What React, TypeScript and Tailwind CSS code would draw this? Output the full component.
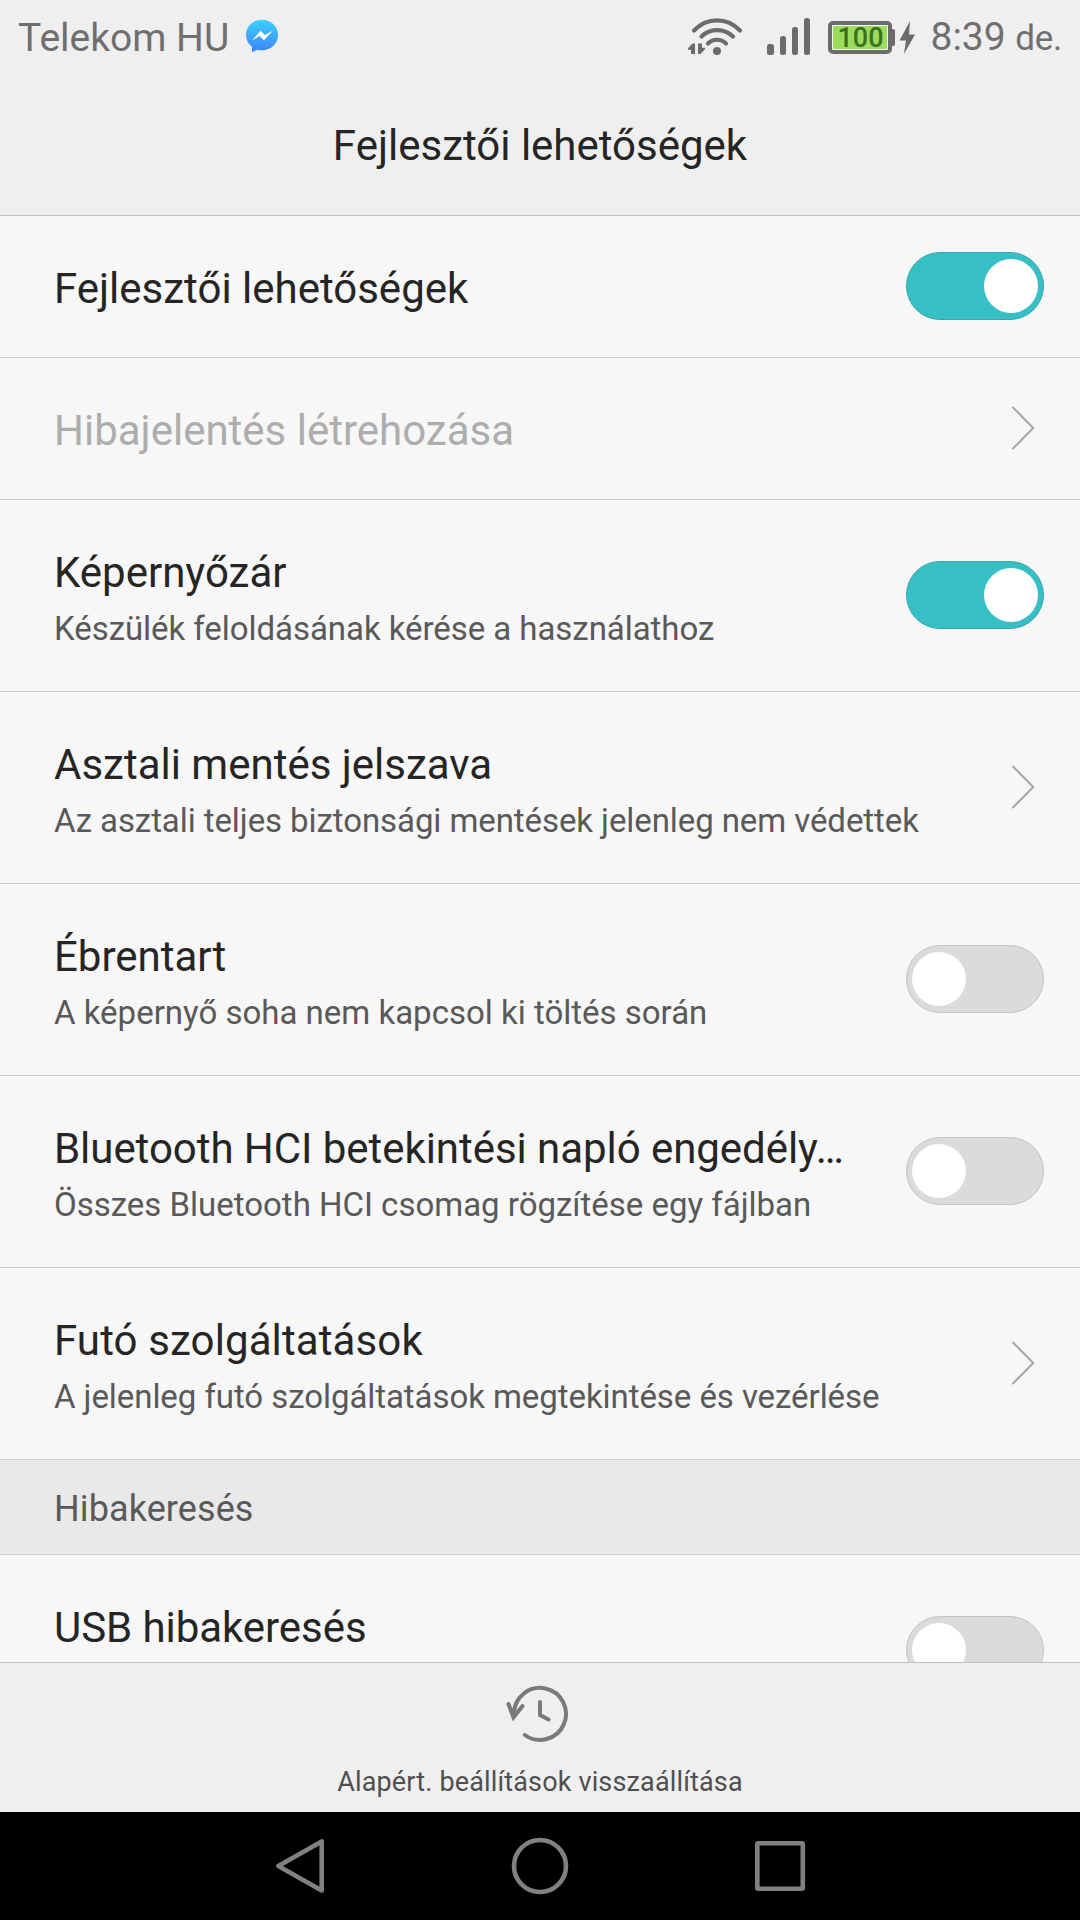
type Control = 'on' | 'off' | 'chevron';

interface Row {
  title: string;
  titleTracking?: string;
  summary?: string;
  summaryTracking?: string;
  control: Control;
  disabled?: boolean;
}

const general: Row[] = [
  { title: 'Fejlesztői lehetőségek', control: 'on' },
  { title: 'Hibajelentés létrehozása', control: 'chevron', disabled: true },
  {
    title: 'Képernyőzár',
    summary: 'Készülék feloldásának kérése a használathoz',
    summaryTracking: 'tracking-[-0.055px]',
    control: 'on',
  },
  {
    title: 'Asztali mentés jelszava',
    summary: 'Az asztali teljes biztonsági mentések jelenleg nem védettek',
    summaryTracking: 'tracking-[-0.08px]',
    control: 'chevron',
  },
  { title: 'Ébrentart', summary: 'A képernyő soha nem kapcsol ki töltés során', control: 'off' },
  {
    title: 'Bluetooth HCI betekintési napló engedély…',
    titleTracking: 'tracking-[-0.05px]',
    summary: 'Összes Bluetooth HCI csomag rögzítése egy fájlban',
    summaryTracking: 'tracking-[-0.01px]',
    control: 'off',
  },
  {
    title: 'Futó szolgáltatások',
    titleTracking: 'tracking-[0.11px]',
    summary: 'A jelenleg futó szolgáltatások megtekintése és vezérlése',
    summaryTracking: 'tracking-[-0.065px]',
    control: 'chevron',
  },
];

const debugging: Row[] = [{ title: 'USB hibakeresés', summary: '', titleTracking: 'tracking-[-0.06px]', control: 'off' }];

function Switch({ on }: { on: boolean }) {
  return (
    <div
      className={
        on
          ? 'mb-[2px] flex h-[68px] w-[138px] items-center justify-end rounded-full border border-[#35a9ae] bg-[#36c0c6] px-[5px]'
          : 'mb-[2px] flex h-[68px] w-[138px] items-center rounded-full border border-[#c3c3c3] bg-[#dbdbdb] px-[5px]'
      }
    >
      <div className="size-[54px] rounded-full bg-white" />
    </div>
  );
}

function Chevron() {
  return (
    <svg className="mr-[9px] mb-[2px] h-11 w-6" viewBox="0 0 24 44" fill="none" stroke="#a6a6a6" strokeWidth="2" strokeLinecap="round">
      <path d="M2 1.500 22.300 22 2 42.500" />
    </svg>
  );
}

function SettingRow({ row }: { row: Row }) {
  const tall = row.summary !== undefined;
  return (
    <div className={`flex shrink-0 items-center justify-between border-b border-[#cfcfcf] pr-9 pl-[54px] ${tall ? 'h-48' : 'h-[142px]'}`}>
      <div className="self-start pt-12 whitespace-nowrap">
        <div className={`text-[42px] leading-[50px] ${row.titleTracking ?? ''} ${row.disabled ? 'text-[#adadad]' : 'text-[#252525]'}`}>
          {row.title}
        </div>
        {row.summary && (
          <div className={`mt-[11px] text-[33px] leading-10 text-[#595959] ${row.summaryTracking ?? ''}`}>{row.summary}</div>
        )}
      </div>
      {row.control === 'chevron' ? <Chevron /> : <Switch on={row.control === 'on'} />}
    </div>
  );
}

function Messenger() {
  return (
    <svg className="mb-[3px] ml-4 h-[34px] w-[34px]" viewBox="245 19 34 34">
      <defs>
        <linearGradient id="bubble" x1="0" y1="0" x2="0" y2="1">
          <stop offset="0" stopColor="#3dd0fb" />
          <stop offset="1" stopColor="#3c84fa" />
        </linearGradient>
      </defs>
      <path fill="url(#bubble)" d="M262 19.800c9.200 0 16 6.700 16 15.200s-6.800 15.200-16 15.200c-1.600 0-3-.1-4.400-.5L252 52.300V46.800C248.300 44 246 40 246 35c0-8.500 6.800-15.200 16-15.200Z" />
      <path fill="#fff" d="m252 40.500 8.500-9.700 4.300 4.200 8-4.300-8.900 9.600-4.300-4.200Z" />
    </svg>
  );
}

function StatusIcons() {
  return (
    <div className="flex items-center">
      <svg className="h-10 w-14" viewBox="687 17 56 40" fill="none" stroke="#6b6b6b" strokeWidth="4.200" strokeLinecap="round">
        <path d="M694 30.500C707 17 727 17 740 30.500M701.500 36.500C710 28 724 28 733 36.500M708 43.500C713 38.500 721 38.500 726 43.500" />
        <circle cx="717" cy="51" r="4" fill="#6b6b6b" stroke="none" />
        <path fill="#6b6b6b" stroke="none" d="M695 43.500V54h-4v-4.300h-3v-1.500l4.500-4.700ZM698 54V43.500h4v4.300h3v1.500L700.500 54Z" />
      </svg>
      <svg className="ml-6 h-10 w-11" viewBox="767 17 44 40" fill="#6b6b6b">
        <rect x="767" y="44" width="7" height="11" rx="2.500" />
        <rect x="780" y="36" width="6" height="19" rx="2.500" />
        <rect x="792" y="27" width="6" height="28" rx="2.500" />
        <rect x="804" y="18" width="6" height="37" rx="2.500" />
      </svg>
      <div className="mt-px ml-[17px] flex h-[33px] w-16 items-center justify-center rounded-[5px] border-4 border-[#6b6b6b] bg-[#f4fbef] p-px">
        <div className="flex h-full w-full items-center justify-center bg-[#9cdc5c] pt-[2px] text-[27px] leading-none font-medium text-[#3b6f1b]">100</div>
      </div>
      <div className="h-[17px] w-[3px] rounded-r-[2px] bg-[#6b6b6b]" />
      <svg className="ml-1 h-[34px] w-4" viewBox="899 20 16 34" fill="#6b6b6b">
        <path d="M910 21 899.500 40.500H906L904 54 915 34.500H909Z" />
      </svg>
    </div>
  );
}

export default function App() {
  return (
    <div className="flex h-[1920px] w-[1080px] flex-col overflow-hidden bg-[#f7f7f7] font-[Roboto,sans-serif]">
      <header className="flex h-[216px] shrink-0 flex-col border-b border-[#bfbfbf] bg-[#efefef]">
        <div className="flex h-[74px] items-center justify-between pr-[18px] pl-[18px] text-[39px] leading-[46px] text-[#6f6f6f]">
          <div className="flex items-center">
            <span className="pt-px">Telekom HU</span>
            <Messenger />
          </div>
          <div className="flex items-center">
            <StatusIcons />
            <div className="ml-[15px] pt-px whitespace-nowrap">
              8:39 <span className="text-[35px] tracking-[-0.3px]">de.</span>
            </div>
          </div>
        </div>
        <h1 className="mt-[47px] text-center text-[42px] leading-[50px] text-[#252525]">Fejlesztői lehetőségek</h1>
      </header>

      <main className="flex h-[1446px] shrink-0 flex-col overflow-hidden">
        {general.map((row) => (
          <SettingRow key={row.title} row={row} />
        ))}
        <h2 className="h-[95px] shrink-0 border-b border-[#cfcfcf] bg-[#e9e9e9] pt-7 pl-[54px] text-[36px] leading-[42px] tracking-[0.1px] text-[#595959]">Hibakeresés</h2>
        {debugging.map((row) => (
          <SettingRow key={row.title} row={row} />
        ))}
      </main>

      <footer className="flex h-[150px] shrink-0 flex-col items-center border-t border-[#bfbfbf] bg-[#efefef]">
        <svg className="mt-[21px] mr-1.5 h-[60px] w-[64px]" viewBox="505 1684 64 60" fill="none" stroke="#7a7a7a" strokeWidth="4" strokeLinecap="round">
          <path d="M524.800 1735A26 26 0 1 0 514 1714M508.500 1704l5 13.500 9-11.500M540 1702v13l8.500 4.500" />
        </svg>
        <div className="mt-[22px] text-[27px] leading-8 tracking-[0.15px] text-[#4f4f4f]">Alapért. beállítások visszaállítása</div>
      </footer>

      <nav className="h-[108px] shrink-0 bg-black">
        <svg className="h-[108px] w-[1080px]" viewBox="0 1812 1080 108" fill="none" stroke="#808080" strokeWidth="4.600" strokeLinejoin="round">
          <path d="M321.700 1841.500v49L278.300 1866Z" />
          <circle cx="540" cy="1866" r="26" />
          <rect x="757.300" y="1843.300" width="45.500" height="45.500" rx="1" />
        </svg>
      </nav>
    </div>
  );
}
